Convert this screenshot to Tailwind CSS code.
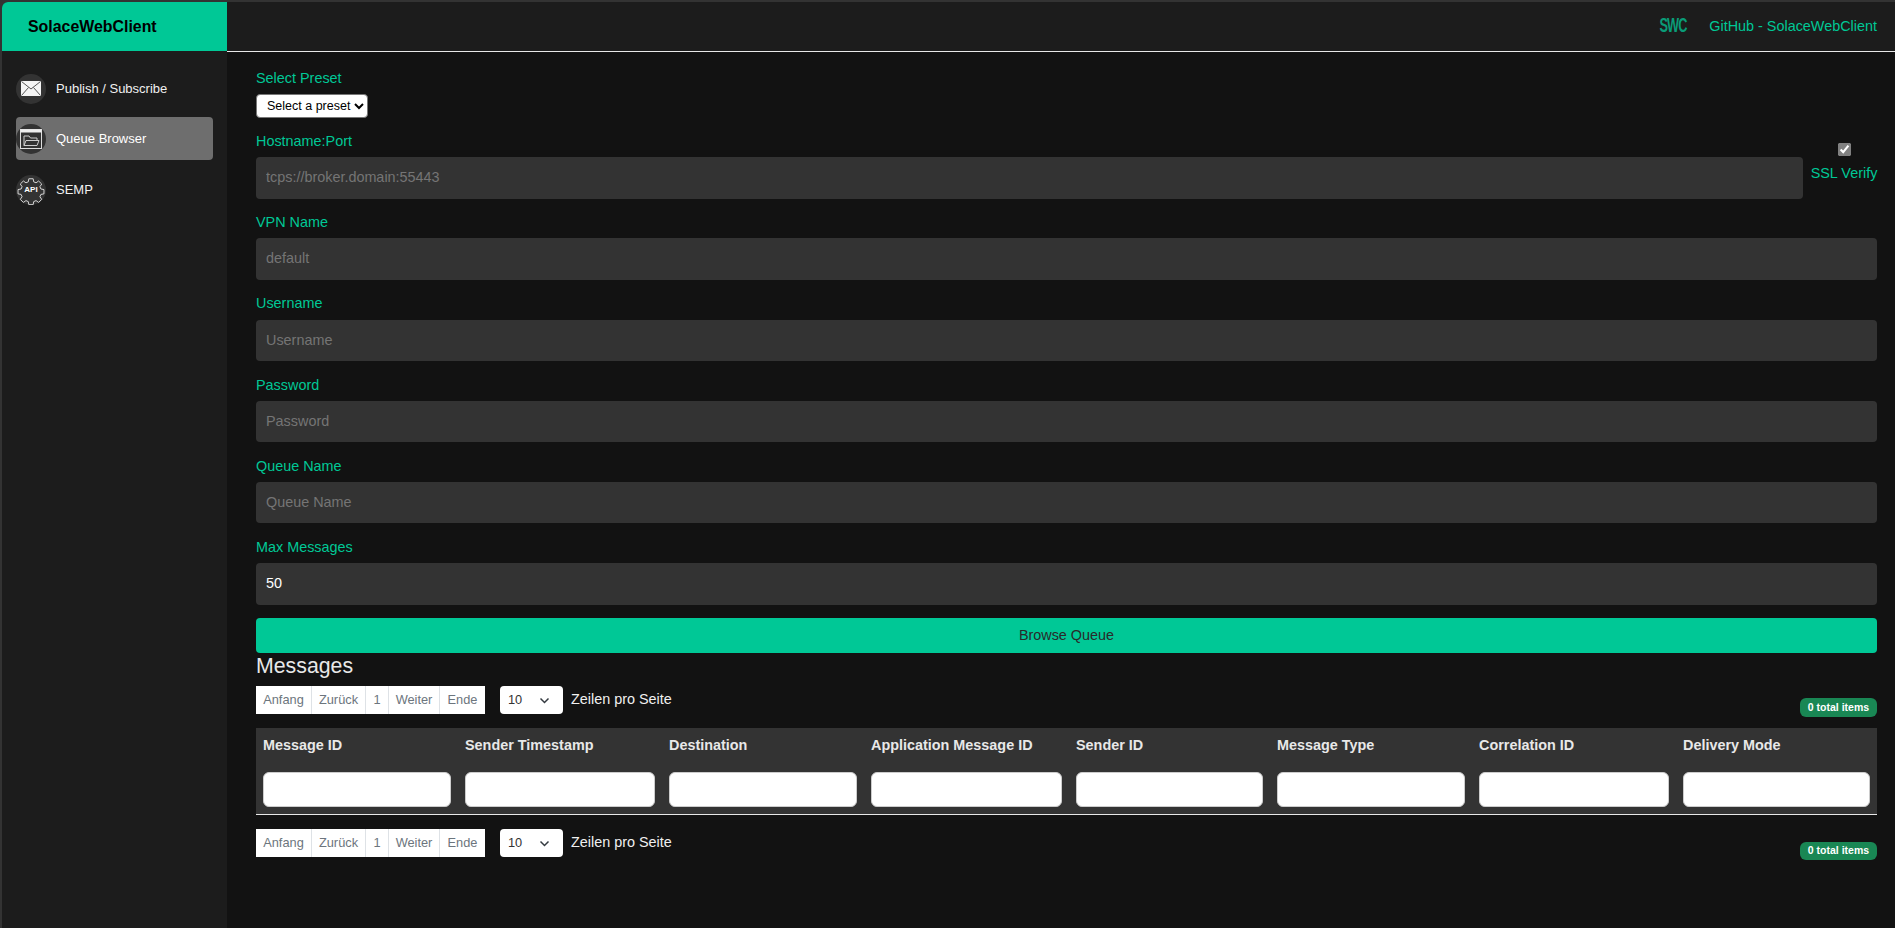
<!DOCTYPE html>
<html>
<head>
<meta charset="utf-8">
<script src="https://cdn.jsdelivr.net/npm/@tailwindcss/browser@4"></script>
</head>
<body class="h-[928px] w-[1895px] overflow-hidden bg-[#333333] font-['Liberation_Sans',Arial,sans-serif]">
<div class="flex h-[928px] pt-[2px] pl-[2px]">
  <aside class="flex h-full w-[225px] shrink-0 flex-col overflow-hidden rounded-tl-[6px] bg-[#1c1c1c]">
    <div class="flex h-[49px] items-center bg-[#00c896] pl-[26px] text-[15.9px] font-bold text-black">SolaceWebClient</div>
    <nav class="flex flex-col gap-[7px] px-[14px] pt-[16px] text-[13px]">
      <a class="flex h-[43px] items-center gap-[10px] rounded-[4px] text-[#f0f0f0]">
        <span class="flex h-[30px] w-[30px] shrink-0 items-center justify-center rounded-full bg-[#333333]">
          <svg width="20" height="15" viewBox="0 0 20 15"><rect width="20" height="15" fill="#f4f4f4"/><path d="M0.5 0.5 10 8 19.5 0.5M0.5 14.5 7.5 6.5M19.5 14.5 12.5 6.5" fill="none" stroke="#444" stroke-width="0.9"/></svg>
        </span>Publish / Subscribe</a>
      <a class="flex h-[43px] items-center gap-[10px] rounded-[4px] bg-[#6e6e6e] text-white">
        <span class="flex h-[30px] w-[30px] shrink-0 items-center justify-center rounded-full bg-[#333333]">
          <svg width="22" height="20" viewBox="0 0 22 20" fill="none"><rect x="0.5" y="0.5" width="21" height="19" stroke="#ddd"/><rect x="0.5" y="0.5" width="21" height="3" fill="#eee"/><path d="M4 16.5V7h5l1.5 2H17v2.5M4 16.5 6 11.5h13l-2 5Z" stroke="#ccc" stroke-width="1"/></svg>
        </span>Queue Browser</a>
      <a class="flex h-[45px] items-center gap-[10px] rounded-[4px] text-[#f0f0f0]">
        <span class="relative flex h-[30px] w-[30px] shrink-0 items-center justify-center rounded-full bg-[#333333]">
          <svg class="absolute left-0 top-0" width="30" height="30" viewBox="0 0 30 30" fill="none"><path d="M12.6 2.5h4.8l.6 3.4 2.6 1.1 2.9-2 3.4 3.4-2 2.9 1.1 2.6 3.4.6v4.8l-3.4.6-1.1 2.6 2 2.9-3.4 3.4-2.9-2-2.6 1.1-.6 3.4h-4.8l-.6-3.4-2.6-1.1-2.9 2-3.4-3.4 2-2.9-1.1-2.6-3.4-.6v-4.8l3.4-.6 1.1-2.6-2-2.9 3.4-3.4 2.9 2 2.6-1.1Z" transform="translate(1.5 1.5) scale(.9)" stroke="#e6e6e6" stroke-width="1"/></svg>
          <span class="relative text-[8px] font-bold text-white">API</span>
        </span>SEMP</a>
    </nav>
  </aside>
  <div class="flex min-w-0 flex-1 flex-col bg-[#121212]">
    <header class="flex h-[50px] shrink-0 items-center justify-end gap-[20px] border-b border-[#e8e8e8] bg-[#1c1c1c] pr-[18px]">
      <span class="inline-block scale-x-[0.85] scale-y-[1.3] text-[15px] font-bold tracking-[-1px] text-[#0a9c78]">SWC</span>
      <a class="text-[14.4px] text-[#00c896]">GitHub - SolaceWebClient</a>
    </header>
    <main class="flex flex-col pl-[29px] pr-[18px] pt-[16px]">
      <label class="text-[14.4px] leading-[20px] text-[#00c896]">Select Preset</label>
      <div class="mt-[6px] flex">
        <select class="h-[24px] w-[112px] rounded-[4px] border border-[#777] bg-white pl-[6px] text-[12.5px] text-black"><option>Select a preset</option></select>
      </div>
      <div class="mt-[13px] flex items-end gap-[8px]">
        <div class="min-w-0 flex-1">
          <label class="block text-[14.4px] leading-[20px] text-[#00c896]">Hostname:Port</label>
          <input class="mt-[6px] block h-[42px] w-full rounded-[4px] bg-[#333333] px-[10px] pb-[2px] text-[14.4px] text-white placeholder:text-[#757575]" placeholder="tcps://broker.domain:55443">
        </div>
        <div class="flex w-[66px] shrink-0 flex-col items-center pb-[18px]">
          <input type="checkbox" checked class="mb-[9px] h-[13px] w-[13px] accent-[#808080]">
          <label class="whitespace-nowrap text-[14.4px] leading-[16px] text-[#00c896]">SSL Verify</label>
        </div>
      </div>
      <label class="mt-[13px] block text-[14.4px] leading-[20px] text-[#00c896]">VPN Name</label>
      <input class="mt-[6px] block h-[42px] w-full rounded-[4px] bg-[#333333] px-[10px] pb-[2px] text-[14.4px] text-white placeholder:text-[#757575]" placeholder="default">
      <label class="mt-[13px] block text-[14.4px] leading-[20px] text-[#00c896]">Username</label>
      <input class="mt-[7px] block h-[41px] w-full rounded-[4px] bg-[#333333] px-[10px] pb-[2px] text-[14.4px] text-white placeholder:text-[#757575]" placeholder="Username">
      <label class="mt-[14px] block text-[14.4px] leading-[20px] text-[#00c896]">Password</label>
      <input type="password" class="mt-[6px] block h-[41px] w-full rounded-[4px] bg-[#333333] px-[10px] pb-[2px] text-[14.4px] text-white placeholder:text-[#757575]" placeholder="Password">
      <label class="mt-[14px] block text-[14.4px] leading-[20px] text-[#00c896]">Queue Name</label>
      <input class="mt-[6px] block h-[41px] w-full rounded-[4px] bg-[#333333] px-[10px] pb-[2px] text-[14.4px] text-white placeholder:text-[#757575]" placeholder="Queue Name">
      <label class="mt-[14px] block text-[14.4px] leading-[20px] text-[#00c896]">Max Messages</label>
      <input class="mt-[6px] block h-[42px] w-full rounded-[4px] bg-[#333333] px-[10px] pb-[2px] text-[14.4px] text-white placeholder:text-[#757575]" value="50">
      <button class="mt-[13px] h-[35px] w-full rounded-[4px] bg-[#00c896] text-center text-[14.4px] text-[#2a2a2a]">Browse Queue</button>
      <h2 class="text-[21.3px] leading-[27px] text-[#e8e8e8]">Messages</h2>

      <div class="mt-[6px] flex items-start justify-between">
        <div class="flex items-center">
          <div class="flex h-[28px] items-center bg-white text-[12.8px] text-[#6c757d]">
            <span class="flex h-full w-[56px] items-center justify-center border-r border-[#dee2e6]">Anfang</span>
            <span class="flex h-full w-[54px] items-center justify-center border-r border-[#dee2e6]">Zurück</span>
            <span class="flex h-full w-[23px] items-center justify-center border-r border-[#dee2e6]">1</span>
            <span class="flex h-full w-[51px] items-center justify-center border-r border-[#dee2e6]">Weiter</span>
            <span class="flex h-full w-[45px] items-center justify-center">Ende</span>
          </div>
          <div class="relative ml-[15px] h-[28px] w-[63px]">
            <select class="h-full w-full appearance-none rounded-[4px] bg-white pl-[8px] text-[12.8px] text-[#333]"><option>10</option></select>
            <svg class="pointer-events-none absolute right-[13px] top-[11px]" width="11" height="7" viewBox="0 0 11 7" fill="none"><path d="M1.5 1.5 5.5 5.5 9.5 1.5" stroke="#343a40" stroke-width="1.5"/></svg>
          </div>
          <span class="ml-[8px] text-[14.4px] text-[#f0f0f0]">Zeilen pro Seite</span>
        </div>
        <span class="mt-[12px] flex h-[19px] w-[77px] items-center justify-center rounded-[6px] bg-[#198754] text-[10.5px] font-bold text-white">0 total items</span>
      </div>

      <div class="mt-[11px] grid grid-cols-[202px_204px_202px_205px_201px_202px_204px_201px] border-b border-[#e8e8e8] bg-[#333333] pb-[7px]">
        <div class="flex flex-col px-[7px] pt-[7px]"><span class="text-[14.4px] font-bold leading-[20px] text-[#e8e8e8]">Message ID</span><input class="mt-[17px] h-[35px] w-full rounded-[6px] border border-[#ccc] bg-white"></div>
        <div class="flex flex-col px-[7px] pt-[7px]"><span class="text-[14.4px] font-bold leading-[20px] text-[#e8e8e8]">Sender Timestamp</span><input class="mt-[17px] h-[35px] w-full rounded-[6px] border border-[#ccc] bg-white"></div>
        <div class="flex flex-col px-[7px] pt-[7px]"><span class="text-[14.4px] font-bold leading-[20px] text-[#e8e8e8]">Destination</span><input class="mt-[17px] h-[35px] w-full rounded-[6px] border border-[#ccc] bg-white"></div>
        <div class="flex flex-col px-[7px] pt-[7px]"><span class="text-[14.4px] font-bold leading-[20px] text-[#e8e8e8]">Application Message ID</span><input class="mt-[17px] h-[35px] w-full rounded-[6px] border border-[#ccc] bg-white"></div>
        <div class="flex flex-col px-[7px] pt-[7px]"><span class="text-[14.4px] font-bold leading-[20px] text-[#e8e8e8]">Sender ID</span><input class="mt-[17px] h-[35px] w-full rounded-[6px] border border-[#ccc] bg-white"></div>
        <div class="flex flex-col px-[7px] pt-[7px]"><span class="text-[14.4px] font-bold leading-[20px] text-[#e8e8e8]">Message Type</span><input class="mt-[17px] h-[35px] w-full rounded-[6px] border border-[#ccc] bg-white"></div>
        <div class="flex flex-col px-[7px] pt-[7px]"><span class="text-[14.4px] font-bold leading-[20px] text-[#e8e8e8]">Correlation ID</span><input class="mt-[17px] h-[35px] w-full rounded-[6px] border border-[#ccc] bg-white"></div>
        <div class="flex flex-col px-[7px] pt-[7px]"><span class="text-[14.4px] font-bold leading-[20px] text-[#e8e8e8]">Delivery Mode</span><input class="mt-[17px] h-[35px] w-full rounded-[6px] border border-[#ccc] bg-white"></div>
      </div>

      <div class="mt-[14px] flex items-start justify-between">
        <div class="flex items-center">
          <div class="flex h-[28px] items-center bg-white text-[12.8px] text-[#6c757d]">
            <span class="flex h-full w-[56px] items-center justify-center border-r border-[#dee2e6]">Anfang</span>
            <span class="flex h-full w-[54px] items-center justify-center border-r border-[#dee2e6]">Zurück</span>
            <span class="flex h-full w-[23px] items-center justify-center border-r border-[#dee2e6]">1</span>
            <span class="flex h-full w-[51px] items-center justify-center border-r border-[#dee2e6]">Weiter</span>
            <span class="flex h-full w-[45px] items-center justify-center">Ende</span>
          </div>
          <div class="relative ml-[15px] h-[28px] w-[63px]">
            <select class="h-full w-full appearance-none rounded-[4px] bg-white pl-[8px] text-[12.8px] text-[#333]"><option>10</option></select>
            <svg class="pointer-events-none absolute right-[13px] top-[11px]" width="11" height="7" viewBox="0 0 11 7" fill="none"><path d="M1.5 1.5 5.5 5.5 9.5 1.5" stroke="#343a40" stroke-width="1.5"/></svg>
          </div>
          <span class="ml-[8px] text-[14.4px] text-[#f0f0f0]">Zeilen pro Seite</span>
        </div>
        <span class="mt-[13px] flex h-[18px] w-[77px] items-center justify-center rounded-[6px] bg-[#198754] text-[10.5px] font-bold text-white">0 total items</span>
      </div>
    </main>
  </div>
</div>
</body>
</html>
